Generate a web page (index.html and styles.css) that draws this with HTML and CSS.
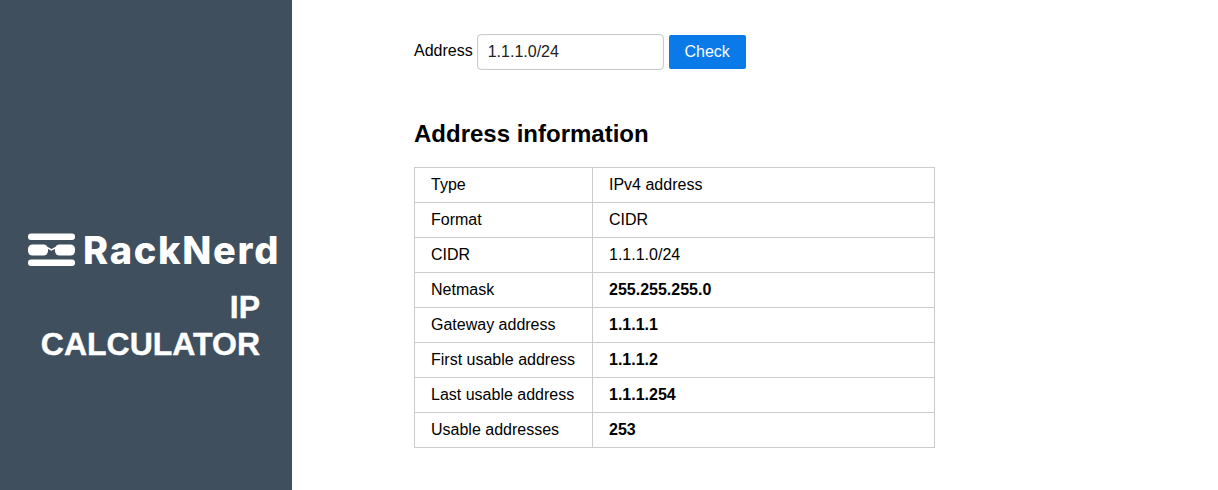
FILE: index.html
```html
<!DOCTYPE html>
<html lang="en">
<head>
<meta charset="utf-8">
<title>IP Calculator</title>
<link rel="stylesheet" href="styles.css">
</head>
<body>
<div class="page">
  <aside class="sidebar">
    <div class="logo">
      <svg class="logo-mark" width="47" height="34" viewBox="0 0 47 34" aria-hidden="true">
        <rect x="0" y="0.5" width="47" height="6.5" rx="3" fill="#fff"/>
        <rect x="0" y="11.5" width="20" height="11" rx="4.5" fill="#fff"/>
        <rect x="27" y="11.5" width="20" height="11" rx="4.5" fill="#fff"/>
        <path d="M19 14.5 L23.5 17 L28 14.5" fill="none" stroke="#fff" stroke-width="1.5"/>
        <rect x="0" y="26.5" width="47" height="6.5" rx="3" fill="#fff"/>
      </svg>
      <span class="logo-text">RackNerd</span>
    </div>
    <h1 class="title">IP<br>CALCULATOR</h1>
  </aside>
  <main class="main">
    <form class="lookup">
      <label class="lookup-label" for="address">Address</label>
      <input class="lookup-input" id="address" type="text" value="1.1.1.0/24">
      <button class="lookup-button" type="button">Check</button>
    </form>
    <h2 class="heading">Address information</h2>
    <table class="info">
      <tbody>
        <tr><td>Type</td><td>IPv4 address</td></tr>
        <tr><td>Format</td><td>CIDR</td></tr>
        <tr><td>CIDR</td><td>1.1.1.0/24</td></tr>
        <tr><td>Netmask</td><td class="strong">255.255.255.0</td></tr>
        <tr><td>Gateway address</td><td class="strong">1.1.1.1</td></tr>
        <tr><td>First usable address</td><td class="strong">1.1.1.2</td></tr>
        <tr><td>Last usable address</td><td class="strong">1.1.1.254</td></tr>
        <tr><td>Usable addresses</td><td class="strong">253</td></tr>
      </tbody>
    </table>
  </main>
</div>
</body>
</html>
```
FILE: styles.css
```css
* { box-sizing: border-box; }
html, body { margin: 0; height: 100%; }
body {
  font-family: "Liberation Sans", Arial, sans-serif;
  font-size: 16px;
  color: #000;
  background: #fff;
}
.page { display: flex; height: 490px; overflow: hidden; }
.sidebar {
  width: 292px;
  flex: none;
  background: #3f4f5e;
  color: #fff;
  display: flex;
  flex-direction: column;
  padding: 233px 32px 0 28px;
}
.logo { display: flex; align-items: center; gap: 8px; margin-right: -19px; }
.logo-mark { flex: none; }
.logo-text {
  font-family: "Inter", sans-serif;
  font-weight: 800;
  font-size: 38px;
  line-height: 34px;
  letter-spacing: 1.7px;
  white-space: nowrap;
}
.title {
  margin: 22px 0 0;
  font-size: 32px;
  line-height: 37px;
  font-weight: 700;
  text-align: right;
  -webkit-text-stroke: 0.4px #fff;
}
.main { flex: 1; padding: 34px 0 0 122px; }
.lookup { display: flex; align-items: flex-start; height: 36px; }
.lookup-label { line-height: 18px; padding-top: 8px; margin-right: 4px; }
.lookup-input {
  width: 187px;
  height: 36px;
  border: 1px solid #ccc;
  border-radius: 4px;
  box-shadow: inset 0 0 1px #bbb;
  padding: 0 10px;
  font: 16px "Liberation Sans", Arial, sans-serif;
  color: #222;
  background: #fff;
}
.lookup-button {
  width: 77px;
  height: 34px;
  margin: 1px 0 0 5px;
  border: 0;
  border-radius: 2px;
  background: #0a7ae8;
  color: #fff;
  font: 16px "Liberation Sans", Arial, sans-serif;
}
.heading {
  margin: 50px 0 19px;
  font-size: 24px;
  line-height: 28px;
  font-weight: 700;
}
.info { width: 521px; border-collapse: collapse; table-layout: fixed; }
.info td {
  height: 35px;
  border: 1px solid #ccc;
  padding: 0 16px;
  line-height: 18px;
  vertical-align: middle;
}
.info td:first-child { width: 178px; }
.strong { font-weight: 700; }
```
